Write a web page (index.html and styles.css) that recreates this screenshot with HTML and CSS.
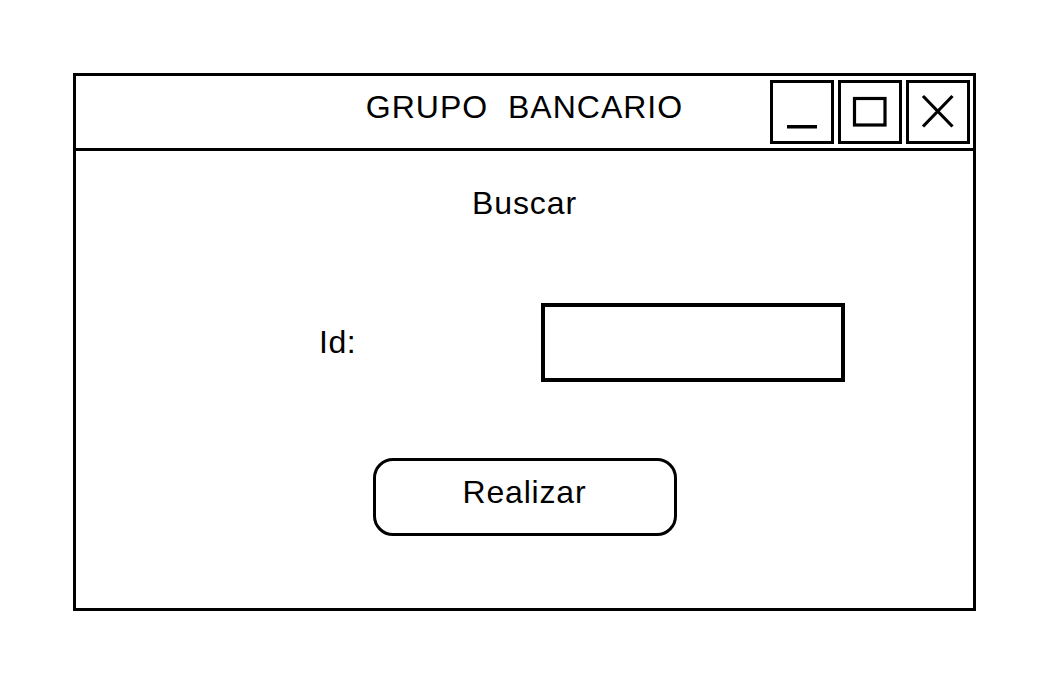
FILE: index.html
```html
<!DOCTYPE html>
<html lang="es">
<head>
<meta charset="utf-8">
<title>Grupo Bancario</title>
<link rel="stylesheet" href="styles.css">
</head>
<body>
<div class="window">
  <div class="titlebar">
    <div class="spacer"></div>
    <div class="title">GRUPO&nbsp;&nbsp;BANCARIO</div>
    <div class="controls">
      <div class="ctl">
        <svg width="58" height="58" viewBox="0 0 58 58"><rect x="14" y="42" width="30" height="3.5" fill="#000"/></svg>
      </div>
      <div class="ctl">
        <svg width="58" height="58" viewBox="0 0 58 58"><rect x="13.5" y="15.5" width="30.5" height="26.5" fill="none" stroke="#000" stroke-width="3.2"/></svg>
      </div>
      <div class="ctl">
        <svg width="58" height="58" viewBox="0 0 58 58"><path d="M14 13 L43.5 43.5 M43.5 13 L14 43.5" stroke="#000" stroke-width="3.2" fill="none"/></svg>
      </div>
    </div>
  </div>
  <div class="content">
    <div class="heading">Buscar</div>
    <div class="id-row">
      <label class="id-label" for="id">Id:</label>
      <input class="id-input" id="id" type="text">
    </div>
    <div class="action">Realizar</div>
  </div>
</div>
</body>
</html>
```

FILE: styles.css
```css
html, body {
  margin: 0;
  padding: 0;
  background: #fff;
}
body {
  font-family: "Liberation Sans", Arial, sans-serif;
  color: #000;
  padding: 73px 0 0 73px;
}
.window {
  box-sizing: border-box;
  width: 903px;
  height: 538px;
  border: 3px solid #000;
  display: flex;
  flex-direction: column;
}
.titlebar {
  box-sizing: border-box;
  height: 75px;
  border-bottom: 3px solid #000;
  display: grid;
  grid-template-columns: 1fr auto 1fr;
}
.title {
  align-self: start;
  margin-top: 13px;
  font-size: 32px;
  line-height: 37px;
  letter-spacing: 1px;
  white-space: nowrap;
}
.controls {
  justify-self: end;
  display: flex;
  gap: 4px;
  padding: 4px 3px 4px 0;
}
.ctl {
  box-sizing: border-box;
  width: 64px;
  height: 64px;
  border: 3px solid #000;
}
.ctl svg {
  display: block;
}
.content {
  flex: 1;
  display: flex;
  flex-direction: column;
  align-items: center;
  padding-top: 34px;
}
.heading {
  font-size: 32px;
  line-height: 37px;
  letter-spacing: 0.9px;
}
.id-row {
  align-self: stretch;
  display: flex;
  align-items: center;
  margin-top: 81px;
  padding-left: 243px;
}
.id-label {
  width: 222px;
  font-size: 32px;
  line-height: 37px;
  letter-spacing: 0.5px;
}
.id-input {
  box-sizing: border-box;
  width: 304px;
  height: 79px;
  border: 4px solid #000;
  margin: 0;
  padding: 0;
  background: #fff;
  outline: none;
}
.action {
  box-sizing: border-box;
  width: 304px;
  height: 78px;
  margin-top: 76px;
  border: 3.5px solid #000;
  border-radius: 20px;
  display: flex;
  align-items: center;
  justify-content: center;
  padding-bottom: 9px;
  font-size: 32px;
  line-height: 37px;
  letter-spacing: 0.8px;
}
```
